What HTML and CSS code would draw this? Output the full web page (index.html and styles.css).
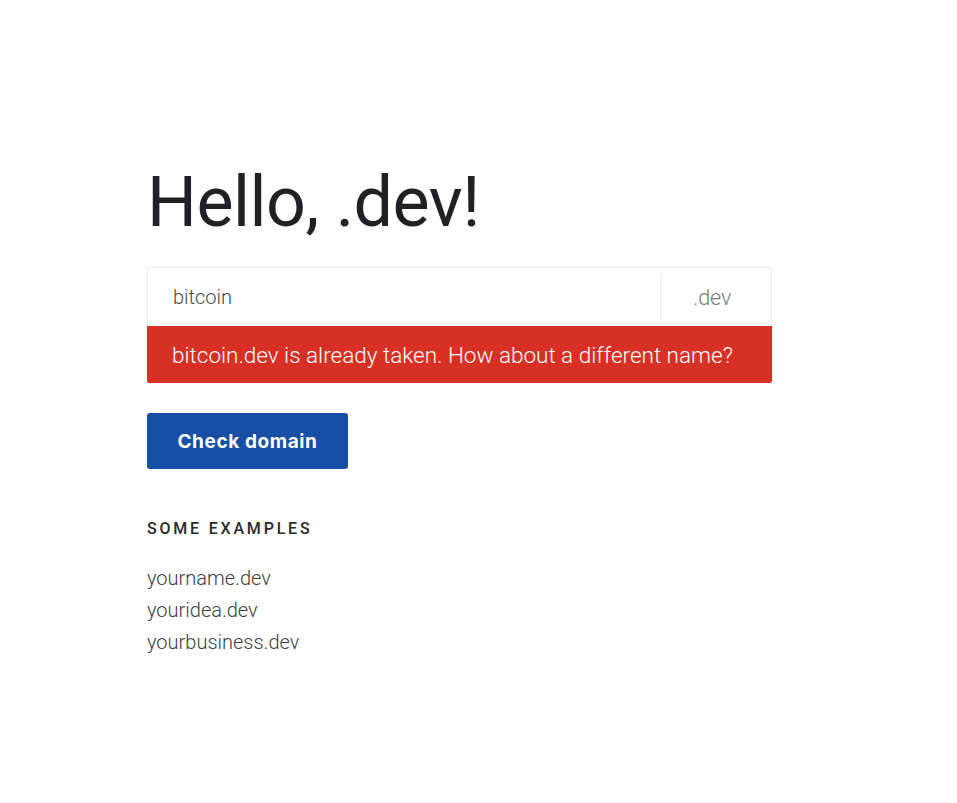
FILE: index.html
```html
<!DOCTYPE html>
<html lang="en">
<head>
    <meta charset="UTF-8">
    <meta name="viewport" content="width=device-width, initial-scale=1.0">
    <title>Hello, .dev!</title>
    <link rel="stylesheet" href="styles.css">
</head>
<body>
    <main class="pagina">
        <h1 class="titulo">Hello, .dev!</h1>

        <div class="busca">
            <div class="campo">
                <span class="nome">bitcoin</span>
                <span class="sufixo">.dev</span>
            </div>
            <div class="erro">bitcoin.dev is already taken. How about a different name?</div>
        </div>

        <button class="botao">Check domain</button>

        <h3 class="exemplos-titulo">SOME EXAMPLES</h3>
        <ul class="exemplos">
            <li>yourname.dev</li>
            <li>youridea.dev</li>
            <li>yourbusiness.dev</li>
        </ul>
    </main>
</body>
</html>
```

FILE: styles.css
```css
body {
    margin: 0;
    background-color: #fff;
    font-family: Roboto, "Liberation Sans", sans-serif;
    color: #202124;
}
.pagina {
    width: 625px;
    padding: 159px 0 0 147px;
}
.titulo {
    margin: 0;
    font-family: Roboto, sans-serif;
    font-weight: 400;
    font-size: 70px;
    line-height: 86px;
    letter-spacing: -0.5px;
    color: #202124;
}
.busca {
    margin-top: 22px;
}
.campo {
    display: flex;
    height: 58px;
    border: 1px solid #ececec;
    border-bottom: none;
}
.nome {
    flex: 1;
    display: flex;
    align-items: center;
    padding-left: 25px;
    font-weight: 300;
    font-size: 20px;
    color: #4a4a4a;
    border-right: 1px solid #ececec;
    margin: 5px 0 6px;
}
.sufixo {
    width: 110px;
    display: flex;
    align-items: center;
    padding-left: 32px;
    box-sizing: border-box;
    font-weight: 300;
    font-size: 21.5px;
    color: #7a7a7a;
}
.erro {
    background-color: #d93025;
    color: #fff;
    height: 57px;
    display: flex;
    align-items: center;
    padding-left: 25px;
    font-weight: 300;
    font-size: 22.5px;
    border-radius: 0 0 2px 2px;
}
.botao {
    margin-top: 30px;
    width: 201px;
    height: 56px;
    border: none;
    border-radius: 3px;
    background-color: #174ea6;
    color: #fff;
    font-family: Inter, Roboto, sans-serif;
    font-weight: 700;
    font-size: 19px;
    letter-spacing: 0.6px;
    cursor: pointer;
}
.exemplos-titulo {
    margin: 50px 0 0;
    font-weight: 500;
    font-size: 16px;
    letter-spacing: 2.8px;
    line-height: 20px;
    color: #2a2a2a;
}
.exemplos {
    list-style: none;
    margin: 23px 0 0;
    padding: 0;
    font-weight: 300;
    font-size: 20px;
    line-height: 32px;
    color: #3c4043;
}
```
